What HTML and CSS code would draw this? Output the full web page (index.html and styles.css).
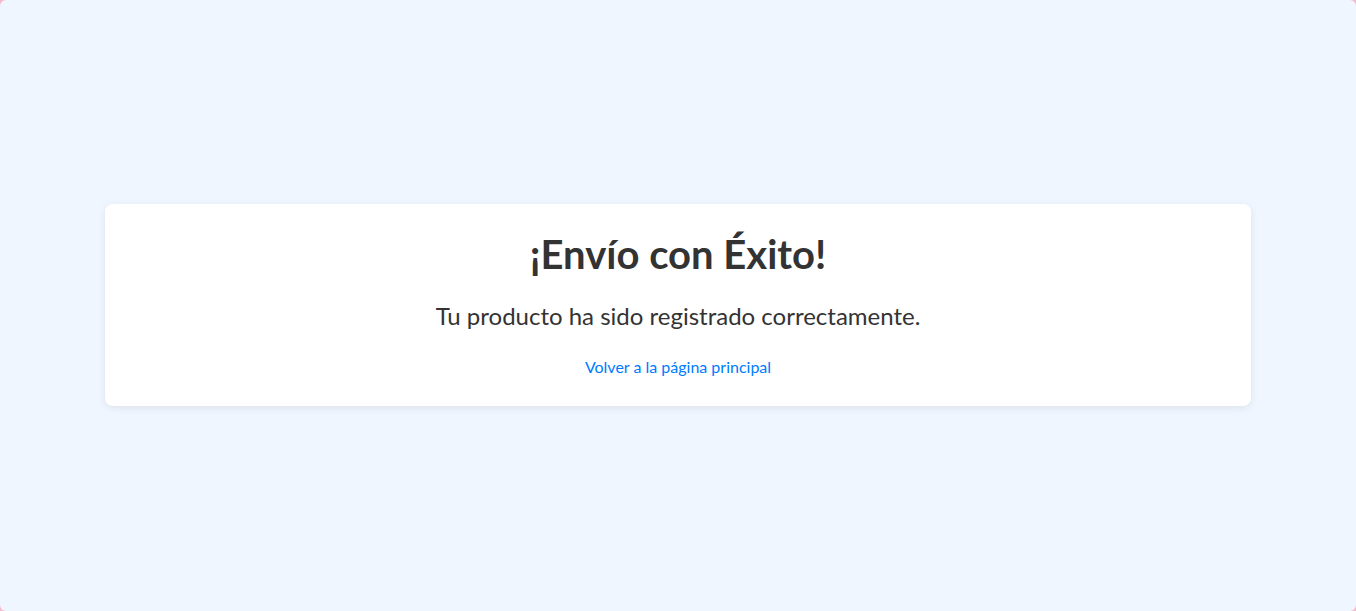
FILE: index.html
```html
<!DOCTYPE html>
<html lang="es">
<head>
<meta charset="utf-8">
<title>Envío con Éxito</title>
<link rel="stylesheet" href="styles.css">
</head>
<body>
<main class="page">
  <section class="card">
    <h1 class="title">¡Envío con Éxito!</h1>
    <p class="message">Tu producto ha sido registrado correctamente.</p>
    <div class="actions"><a class="back" href="#">Volver a la página principal</a></div>
  </section>
</main>
</body>
</html>
```

FILE: styles.css
```css
html {
  background: #f4b8cc;
}
body {
  margin: 0;
  font-family: Lato, "Noto Sans", sans-serif;
  color: #333333;
}
.page {
  height: 611px;
  box-sizing: border-box;
  padding-bottom: 1px;
  background: #eff6ff;
  border-radius: 6px;
  display: flex;
  align-items: center;
  justify-content: center;
}
.card {
  width: 1146px;
  box-sizing: border-box;
  background: #ffffff;
  border-radius: 8px;
  box-shadow: 0 2px 8px rgba(0, 0, 0, 0.08);
  padding: 26px 20px 30px;
  text-align: center;
}
.title {
  margin: 0;
  font-size: 40px;
  font-weight: 700;
  line-height: 48px;
}
.message {
  margin: 20px 0 23px;
  font-size: 24px;
  line-height: 36px;
}
.actions {
  font-size: 16px;
  line-height: 19px;
}
.back {
  color: #007bff;
  text-decoration: none;
}
```
